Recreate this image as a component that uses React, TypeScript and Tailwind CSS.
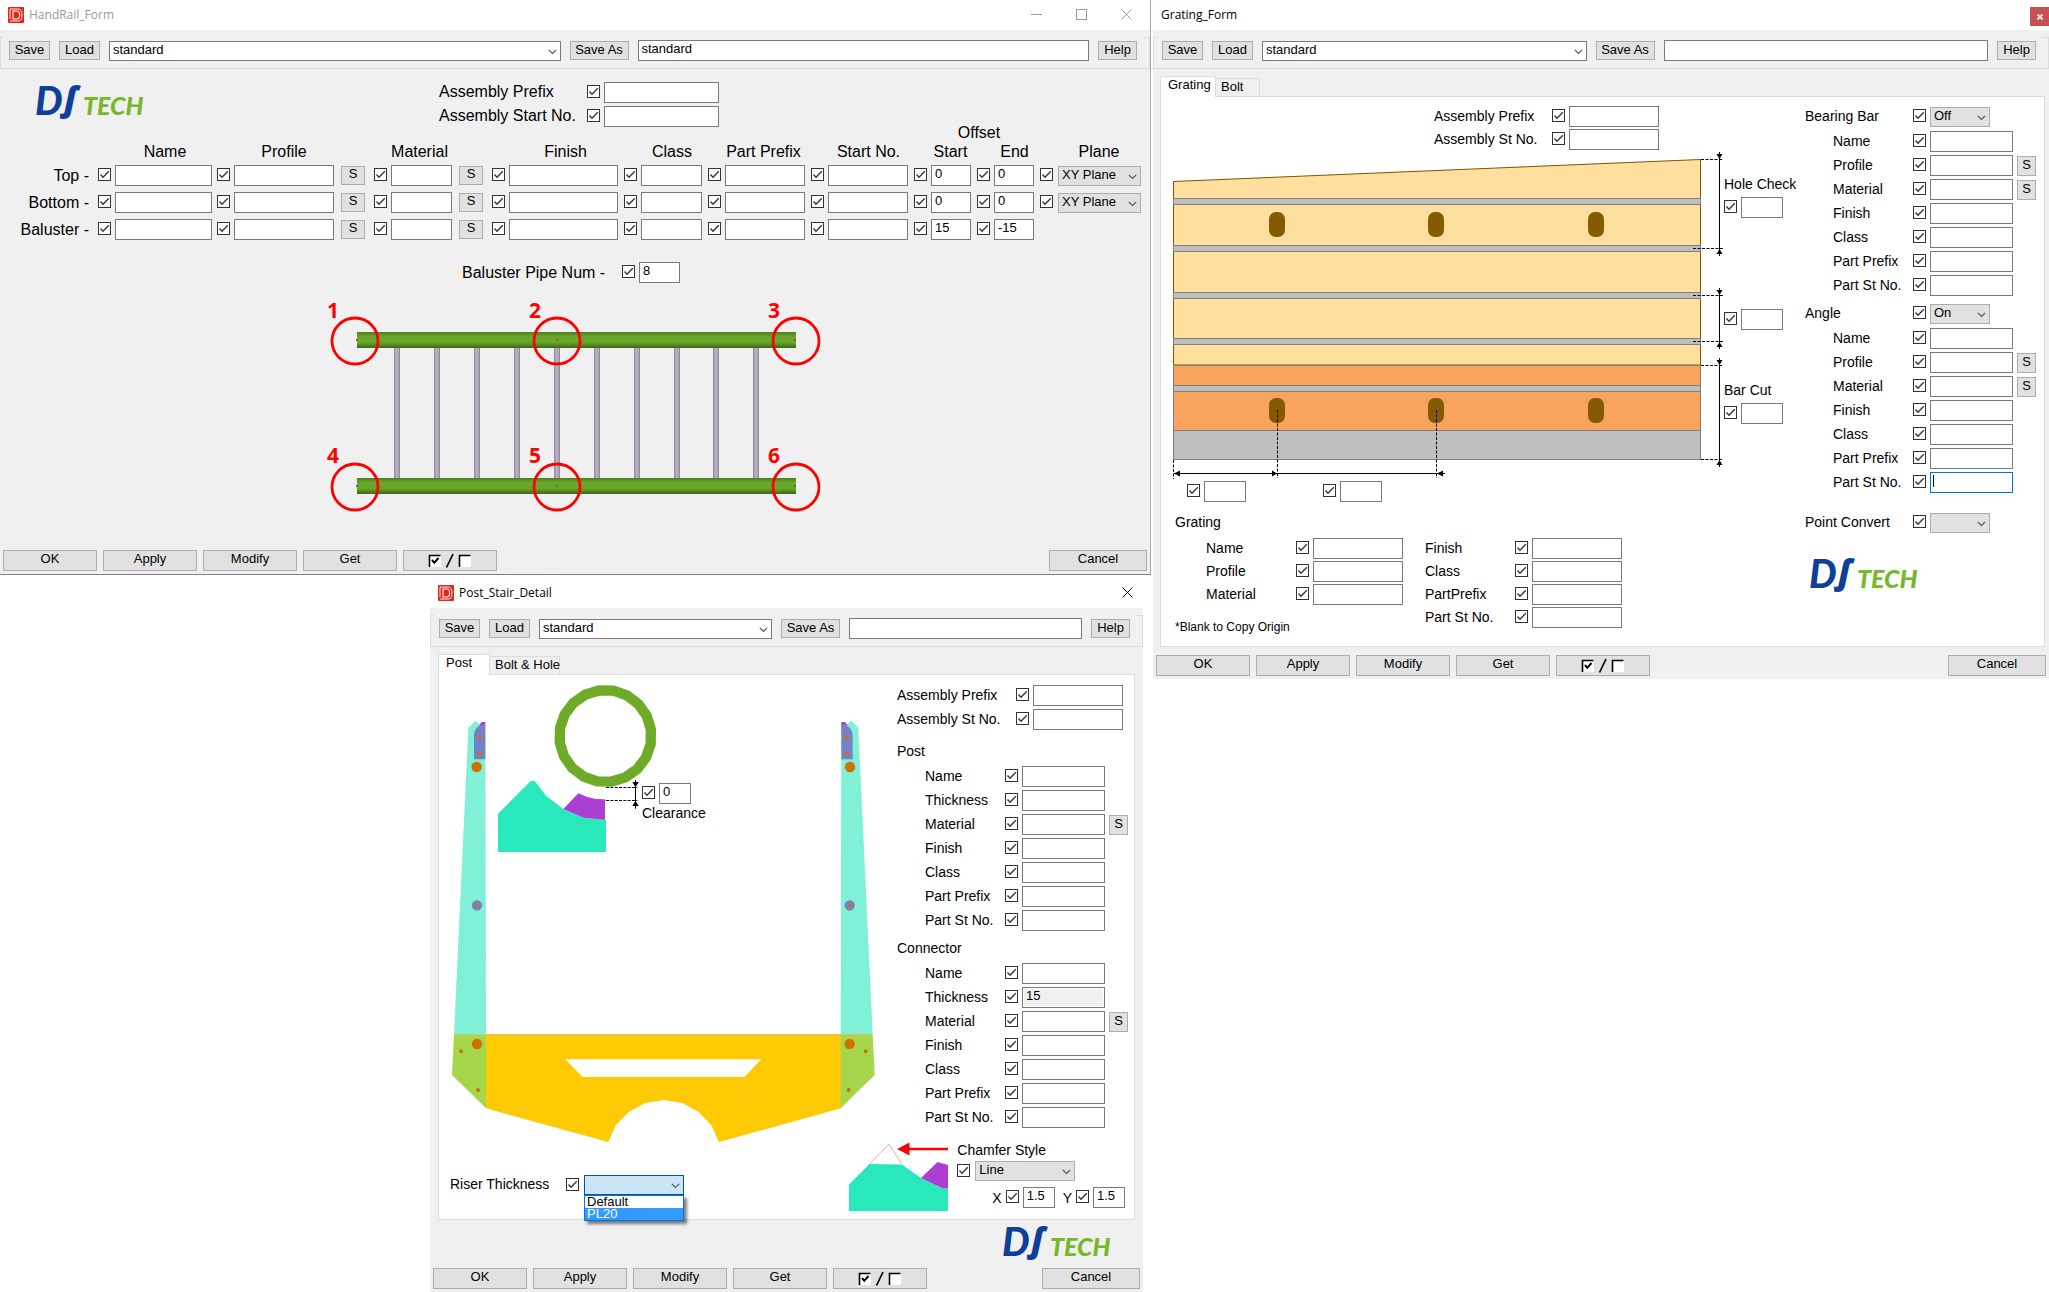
import { useId } from "react";
import type { ReactNode } from "react";

/* ---------- basic controls ---------- */

function Check({ label }: { label: string }) {
  return (
    <span className="mb-[2px] inline-grid size-[13px] shrink-0">
      <input
        type="checkbox"
        defaultChecked
        aria-label={label}
        className="peer col-start-1 row-start-1 size-[13px] appearance-none border border-[#333333] bg-white"
      />
      <svg
        viewBox="0 0 13 13"
        className="pointer-events-none col-start-1 row-start-1 size-[13px] opacity-0 peer-checked:opacity-100"
        fill="none"
        stroke="#333333"
        strokeWidth="1.3"
      >
        <path d="M2.5 6.5 L5 9.2 L10.8 3.2" />
      </svg>
    </span>
  );
}

function TextBox({
  id,
  label,
  value,
  width,
  focused,
  muted,
}: {
  id?: string;
  label?: string;
  value?: string;
  width: string;
  focused?: boolean;
  muted?: boolean;
}) {
  return (
    <span className={`relative flex h-[21px] min-w-0 ${width}`}>
      <input
        id={id}
        type="text"
        aria-label={label}
        defaultValue={value}
        className={`h-[21px] w-full min-w-0 border px-[3px] pb-1 text-[13px] leading-4 text-black outline-none ${
          focused ? "border-[#0078d7] caret-transparent" : "border-[#7a7a7a]"
        } ${muted ? "bg-[#f0f0f0] shadow-[inset_0_0_0_1px_#ffffff]" : "bg-white"}`}
      />
      {focused && <span className="pointer-events-none absolute top-[3px] left-[3px] h-[12px] w-px bg-black" />}
    </span>
  );
}

function Chevron() {
  return (
    <svg
      viewBox="0 0 9 6"
      className="pointer-events-none absolute top-[8px] right-[4px] h-[6px] w-[9px]"
      fill="none"
      stroke="#555555"
      strokeWidth="1.2"
    >
      <path d="M0.8 0.8 L4.5 4.5 L8.2 0.8" />
    </svg>
  );
}

function Select({
  id,
  label,
  value,
  width,
  tone = "grey",
}: {
  id?: string;
  label?: string;
  value: string;
  width: string;
  tone?: "grey" | "white" | "open";
}) {
  const tones = {
    grey: "bg-[#e1e1e1] border-[#adadad]",
    white: "bg-white border-[#7a7a7a]",
    open: "bg-[#cce4f7] border-[#005499]",
  };
  return (
    <span className={`relative flex h-[20px] min-w-0 ${width}`}>
      <select
        id={id}
        aria-label={label}
        defaultValue={value}
        className={`h-[20px] w-full appearance-none border pr-4 pb-[2px] pl-[3px] text-[13px] leading-4 text-black ${tones[tone]}`}
      >
        <option value={value}>{value}</option>
      </select>
      <Chevron />
    </span>
  );
}

function Button({ children, className }: { children: ReactNode; className: string }) {
  return (
    <button
      type="button"
      className={`flex shrink-0 items-center justify-center border border-[#adadad] bg-[#e1e1e1] text-[13px] leading-4 whitespace-nowrap text-black ${className}`}
    >
      {children}
    </button>
  );
}

/* ---------- brand marks ---------- */

function DsLogo() {
  return (
    <svg viewBox="0 0 107 28" className="h-[28px] w-[107px] shrink-0 overflow-visible" role="img" aria-label="DS TECH">
      <g fontStyle="italic" fontWeight="900" fontFamily="Lato, 'Open Sans', sans-serif">
        <text x="-1" y="28" fontSize="39" fill="#0f4099">
          D
        </text>
        <text x="28" y="24" fontSize="34" fill="#0f4099" fontFamily="'Open Sans', sans-serif" fontWeight="800">
          ſ
        </text>
        <text x="47" y="28" fontSize="25" fill="#76b82a">
          TECH
        </text>
      </g>
    </svg>
  );
}

function AppIcon() {
  return (
    <svg viewBox="0 0 16 16" className="size-4 shrink-0" aria-hidden="true">
      <rect width="16" height="16" rx="1" fill="#e0261d" />
      <path d="M2 2 H10 Q14 2 14 8 Q14 14 10 14 H2 M2 12 V2" fill="none" stroke="#ffffff" strokeWidth="0.9" />
      <path d="M5 4 H8.6 Q11.6 4 11.6 8 Q11.6 12 8.6 12 H5 Z" fill="none" stroke="#ffffff" strokeWidth="1.1" />
    </svg>
  );
}

/* ---------- window parts ---------- */

function Toolbar({ value }: { value: string }) {
  return (
    <div className="h-[39px] pt-[7px]">
      <div className="relative flex h-[32px] items-center gap-[9px] border-x border-b border-[#dcdcdc] pr-[12px] pb-[4px] pl-[8px] before:absolute before:top-0 before:left-0 before:h-px before:w-[3px] before:bg-[#dcdcdc] after:absolute after:top-0 after:right-0 after:h-px after:w-[6px] after:bg-[#dcdcdc]">
        <Button className="h-[19px] w-[41px] pb-px">Save</Button>
        <Button className="h-[19px] w-[41px] pb-px">Load</Button>
        <Select label="Saved settings" value="standard" width="flex-1" tone="white" />
        <Button className="h-[19px] w-[59px] pb-px">Save As</Button>
        <TextBox label="Save as name" value={value} width="flex-1" />
        <Button className="h-[19px] w-[39px] pb-px">Help</Button>
      </div>
    </div>
  );
}

function Footer() {
  return (
    <div className="flex gap-[6px] px-[3px] pb-[3px]">
      <Button className="h-[21px] w-[94px] pb-[3px]">OK</Button>
      <Button className="h-[21px] w-[94px] pb-[3px]">Apply</Button>
      <Button className="h-[21px] w-[94px] pb-[3px]">Modify</Button>
      <Button className="h-[21px] w-[94px] pb-[3px]">Get</Button>
      <Button className="h-[21px] w-[94px]">
        <svg viewBox="0 0 44 15" className="h-[15px] w-[44px]" aria-label="Toggle all" role="img">
          <g fill="#ffffff">
            <rect x="1" y="2" width="12" height="12" />
            <rect x="31" y="2" width="12" height="12" />
          </g>
          <path d="M1.5 14 V2.5 H12.5 M31.5 14 V2.5 H42.5" fill="none" stroke="#000000" strokeWidth="1.6" />
          <path d="M4 7 L6.3 9.8 L10.5 5" fill="none" stroke="#000000" strokeWidth="2" />
          <path d="M18.5 14.5 L25 1" stroke="#000000" strokeWidth="1.7" />
        </svg>
      </Button>
      <Button className="ml-auto h-[21px] w-[98px] pb-[3px]">Cancel</Button>
    </div>
  );
}

function Tabs({
  first,
  firstWidth,
  second,
  secondWidth,
}: {
  first: string;
  firstWidth: string;
  second: string;
  secondWidth: string;
}) {
  return (
    <div role="tablist" className="relative z-10 -mb-px flex items-end text-[13px] leading-4">
      <button
        role="tab"
        aria-selected="true"
        type="button"
        className={`flex h-[21px] items-center border border-b-0 border-[#dcdcdc] bg-white pb-1 pl-[7px] whitespace-nowrap ${firstWidth}`}
      >
        {first}
      </button>
      <button
        role="tab"
        aria-selected="false"
        type="button"
        className={`flex h-[19px] items-center border border-l-0 border-[#dcdcdc] bg-[#f0f0f0] pb-px pl-[5px] whitespace-nowrap ${secondWidth}`}
      >
        {second}
      </button>
    </div>
  );
}

function LabelledField({ label, labelWidth, width }: { label: string; labelWidth: string; width: string }) {
  const id = useId();
  return (
    <div className="flex items-center leading-4">
      <label htmlFor={id} className={`shrink-0 pb-[2px] whitespace-nowrap ${labelWidth}`}>
        {label}
      </label>
      <Check label={`Use ${label}`} />
      <span className="w-1 shrink-0" />
      <TextBox id={id} width={width} />
    </div>
  );
}

type Row = { label: string; s?: boolean; value?: string; muted?: boolean; focused?: boolean };

function FieldGroup({ title, select, rows }: { title: string; select?: string; rows: Row[] }) {
  const base = useId();
  return (
    <fieldset className="text-[14px] leading-4">
      <div className="mb-1 flex h-[21px] items-center">
        {select ? (
          <>
            <label htmlFor={`${base}-select`} className="w-[108px] pb-[2px]">
              {title}
            </label>
            <Check label={`Use ${title}`} />
            <span className="w-1" />
            <Select id={`${base}-select`} value={select} width="w-[60px]" />
          </>
        ) : (
          <span className="pb-[2px]">{title}</span>
        )}
      </div>
      <div className="flex flex-col gap-[3px]">
        {rows.map((row) => (
          <div key={row.label} className="flex h-[21px] items-center gap-1 pl-[28px]">
            <label htmlFor={`${base}-${row.label}`} className="w-[76px] pb-[2px] whitespace-nowrap">
              {row.label}
            </label>
            <Check label={`Use ${title} ${row.label}`} />
            <TextBox
              id={`${base}-${row.label}`}
              width="w-[83px]"
              value={row.value}
              muted={row.muted}
              focused={row.focused}
            />
            {row.s && <Button className="h-[20px] w-[19px] pb-px">S</Button>}
          </div>
        ))}
      </div>
    </fieldset>
  );
}

/* ---------- HandRail form ---------- */

const railColumns = [
  { title: "Name", width: "w-[119px]", pad: "pr-[5px]", head: "pl-[15px]" },
  { title: "Profile", width: "w-[157px]", pad: "pr-[9px]", head: "pr-[23px]", s: true },
  { title: "Material", width: "w-[118px]", pad: "pr-[9px]", head: "pr-[27px]", s: true },
  { title: "Finish", width: "w-[132px]", pad: "pr-[6px]", head: "pl-[15px]" },
  { title: "Class", width: "w-[84px]", pad: "pr-[6px]", head: "pl-[12px]" },
  { title: "Part Prefix", width: "w-[103px]", pad: "pr-[6px]", head: "pl-[8px]" },
  { title: "Start No.", width: "w-[103px]", pad: "pr-[6px]", head: "pl-[12px]" },
  { title: "Start", width: "w-[63px]", pad: "pr-[6px]", head: "pl-[10px]" },
  { title: "End", width: "w-[63px]", pad: "pr-[6px]", head: "pl-[12px]" },
];

const railRows = [
  { name: "Top", start: "0", end: "0", plane: true },
  { name: "Bottom", start: "0", end: "0", plane: true },
  { name: "Baluster", start: "15", end: "-15", plane: false },
];

function RailDiagram() {
  const bars = [397, 437, 477, 517, 557, 597, 637, 677, 716, 756];
  const marks = [
    { n: "1", x: 355, y: 341, tx: 327, ty: 318 },
    { n: "2", x: 557, y: 341, tx: 529, ty: 318 },
    { n: "3", x: 796, y: 341, tx: 768, ty: 318 },
    { n: "4", x: 355, y: 487, tx: 327, ty: 463 },
    { n: "5", x: 557, y: 487, tx: 529, ty: 463 },
    { n: "6", x: 796, y: 487, tx: 768, ty: 463 },
  ];
  return (
    <svg
      viewBox="320 296 510 224"
      className="h-[224px] w-[510px]"
      role="img"
      aria-label="Handrail with six reference points"
    >
      <defs>
        <linearGradient id="rail" x1="0" y1="0" x2="0" y2="1">
          <stop offset="0" stopColor="#4c7a20" />
          <stop offset="0.25" stopColor="#67a528" />
          <stop offset="0.65" stopColor="#67a828" />
          <stop offset="1" stopColor="#3f6418" />
        </linearGradient>
        <linearGradient id="bar" x1="0" y1="0" x2="1" y2="0">
          <stop offset="0" stopColor="#8d8896" />
          <stop offset="0.4" stopColor="#b6b0c4" />
          <stop offset="0.75" stopColor="#aea8bc" />
          <stop offset="1" stopColor="#7d7885" />
        </linearGradient>
      </defs>
      {bars.map((x) => (
        <rect key={x} x={x - 3} y="347" width="6" height="132" fill="url(#bar)" />
      ))}
      <rect x="357" y="332" width="439" height="16" fill="url(#rail)" />
      <rect x="357" y="478" width="439" height="16" fill="url(#rail)" />
      {[357, 557, 795].map((x) => (
        <g key={x}>
          <rect x={x - 1} y="339" width="2" height="2" fill="#b8501e" />
          <rect x={x - 1} y="485" width="2" height="2" fill="#3f7a5a" />
        </g>
      ))}
      {marks.map((m) => (
        <g key={m.n}>
          <circle cx={m.x} cy={m.y} r="23" fill="none" stroke="#ff0000" strokeWidth="2.8" />
          <text x={m.tx} y={m.ty} fontSize="21" fontWeight="700" fontFamily="'Open Sans', sans-serif" fill="#ff0000">
            {m.n}
          </text>
        </g>
      ))}
    </svg>
  );
}

function HandRailWindow() {
  return (
    <section className="border-r border-b border-r-[#a8a8a8] border-b-[#857a8c] bg-[#f0f0f0]">
      <header className="flex h-[30px] items-center gap-[5px] bg-white pb-px pl-[8px]">
        <AppIcon />
        <h1 className="font-['Open_Sans'] text-[12px] text-[#999999]">HandRail_Form</h1>
        <div className="ml-auto flex gap-[34px] pr-[18px]">
          <button type="button" aria-label="Minimize">
            <svg viewBox="0 0 11 11" className="size-[11px]" stroke="#999999" fill="none">
              <path d="M0 5.5 H11" />
            </svg>
          </button>
          <button type="button" aria-label="Maximize">
            <svg viewBox="0 0 11 11" className="size-[11px]" stroke="#999999" fill="none">
              <rect x="0.5" y="0.5" width="10" height="10" />
            </svg>
          </button>
          <button type="button" aria-label="Close">
            <svg viewBox="0 0 11 11" className="size-[11px]" stroke="#999999" fill="none">
              <path d="M0.5 0.5 L10.5 10.5 M10.5 0.5 L0.5 10.5" />
            </svg>
          </button>
        </div>
      </header>
      <Toolbar value="standard" />
      <div className="-mb-1 flex pt-[13px] pl-[36px] text-[16px] leading-5">
        <div className="w-[403px] pt-[5px]">
          <DsLogo />
        </div>
        <div className="flex flex-col gap-[3px]">
          <LabelledField label="Assembly Prefix" labelWidth="w-[148px]" width="w-[115px]" />
          <LabelledField label="Assembly Start No." labelWidth="w-[148px]" width="w-[115px]" />
        </div>
      </div>
      <table className="w-full table-fixed text-[16px] leading-5">
        <colgroup>
          <col className="w-[98px]" />
          {railColumns.map((c) => (
            <col key={c.title} className={c.width} />
          ))}
          <col />
        </colgroup>
        <thead>
          <tr className="h-[19px]">
            <td colSpan={8} />
            <th colSpan={2} scope="colgroup" className="p-0 pl-1 leading-4 font-normal">
              Offset
            </th>
            <td />
          </tr>
          <tr className="h-[20px]">
            <td />
            {railColumns.map((c) => (
              <th key={c.title} scope="col" className={`p-0 font-normal whitespace-nowrap ${c.head}`}>
                {c.title}
              </th>
            ))}
            <th scope="col" className="p-0 pl-[8px] font-normal">
              Plane
            </th>
          </tr>
        </thead>
        <tbody>
          {railRows.map((r) => (
            <tr key={r.name} className="h-[27px]">
              <th scope="row" className="p-0 pr-[9px] text-right font-normal whitespace-nowrap">
                {r.name} -
              </th>
              {railColumns.map((c) => (
                <td key={c.title} className="p-0">
                  <div className={`flex items-center gap-1 ${c.pad}`}>
                    <Check label={`Use ${r.name} ${c.title}`} />
                    <TextBox
                      label={`${r.name} ${c.title}`}
                      width="flex-1"
                      value={c.title === "Start" ? r.start : c.title === "End" ? r.end : ""}
                    />
                    {c.s && (
                      <span className="pl-[3px]">
                        <Button className="h-[19px] w-[24px] pb-1">S</Button>
                      </span>
                    )}
                  </div>
                </td>
              ))}
              <td className="p-0">
                {r.plane && (
                  <div className="flex items-center gap-[5px] pr-[9px]">
                    <Check label={`Use ${r.name} Plane`} />
                    <Select label={`${r.name} Plane`} value="XY Plane" width="flex-1" />
                  </div>
                )}
              </td>
            </tr>
          ))}
        </tbody>
      </table>
      <div className="flex items-center gap-1 pt-[19px] pl-[462px] text-[16px] leading-5">
        <label htmlFor="pipe-num" className="w-[156px]">
          Baluster Pipe Num -
        </label>
        <Check label="Use Baluster Pipe Num" />
        <TextBox id="pipe-num" value="8" width="w-[41px]" />
      </div>
      <div className="pt-[13px] pb-[30px] pl-[320px]">
        <RailDiagram />
      </div>
      <Footer />
    </section>
  );
}

/* ---------- Grating form ---------- */

function Dimension({ x, from, to }: { x: number; from: number; to: number }) {
  return (
    <g>
      <path d={`M${x} ${from - 7} V${to + 7}`} stroke="#000000" />
      <path d={`M${x - 3} ${from - 5} H${x + 3} L${x} ${from} Z`} />
      <path d={`M${x - 3} ${to + 5} H${x + 3} L${x} ${to} Z`} />
    </g>
  );
}

function GratingDiagram() {
  const slots = [1277, 1436, 1596];
  return (
    <svg
      viewBox="1161 150 562 330"
      className="h-[330px] w-[562px] shrink-0"
      role="img"
      aria-label="Grating section"
    >
      <path d="M1173.5 365 V181.5 L1700.5 159.5 V365 Z" fill="#ffdf9e" stroke="#805400" />
      <path d="M1173.5 365.5 H1700.5 V430.5 H1173.5 Z" fill="#f9a45e" stroke="#808080" />
      <path d="M1173.5 430.5 H1700.5 V459.5 H1173.5 Z" fill="#bfbfbf" stroke="#808080" />
      {[198, 245, 292, 338, 385].map((y) => (
        <rect key={y} x="1173.5" y={y + 0.5} width="527" height="6" fill="#bfbfbf" stroke="#808080" />
      ))}
      {slots.map((x) => (
        <g key={x} fill="#855a00">
          <rect x={x - 8} y="212" width="16" height="25" rx="7" />
          <rect x={x - 8} y="398" width="16" height="25" rx="7" />
        </g>
      ))}
      <g stroke="#000000" strokeDasharray="3 1.5" fill="none">
        <path d="M1173.5 460 V479 M1277.5 410 V478 M1436.5 410 V478" />
        <path d="M1701 159.5 H1725 M1693 248.5 H1725 M1693 295.5 H1725 M1693 341.5 H1725 M1701 365.5 H1725 M1701 459.5 H1725" />
      </g>
      <path d="M1174 473.5 H1445" stroke="#000000" />
      <path d="M1174 473.5 l6 -3 v6 Z M1277 473.5 l-5 -3 v6 Z M1437 473.5 l6 -3 v6 Z" />
      <Dimension x={1719.5} from={159} to={249} />
      <Dimension x={1719.5} from={295} to={342} />
      <Dimension x={1719.5} from={365} to={460} />
    </svg>
  );
}

function SmallField({ label }: { label: string }) {
  return (
    <div className="flex items-center gap-1">
      <Check label={`Use ${label}`} />
      <TextBox label={label} width="w-[42px]" />
    </div>
  );
}

const gratingRows: Row[] = [
  { label: "Name" },
  { label: "Profile", s: true },
  { label: "Material", s: true },
  { label: "Finish" },
  { label: "Class" },
  { label: "Part Prefix" },
  { label: "Part St No." },
];

function GratingWindow() {
  return (
    <section className="bg-[#f0f0f0]">
      <header className="flex h-[30px] items-center bg-white pl-[8px]">
        <h1 className="pb-px font-['Open_Sans'] text-[12px] text-black">Grating_Form</h1>
        <button
          type="button"
          aria-label="Close"
          className="mt-[3px] ml-auto flex size-[19px] items-center justify-center bg-[#c75050]"
        >
          <svg viewBox="0 0 6 6" className="size-[6px]" stroke="#ffffff" strokeWidth="1.6">
            <path d="M0.5 0.5 L5.5 5.5 M5.5 0.5 L0.5 5.5" />
          </svg>
        </button>
      </header>
      <Toolbar value="" />
      <div className="pt-[7px] pr-[4px] pb-[8px] pl-[7px]">
        <Tabs first="Grating" firstWidth="w-[56px]" second="Bolt" secondWidth="w-[44px]" />
        <div className="flex justify-between border border-[#dcdcdc] bg-white pt-[9px] pr-[8px] pb-[11px] text-[14px] leading-4">
          <div>
            <div className="flex flex-col gap-[2px] pl-[273px]">
              <LabelledField label="Assembly Prefix" labelWidth="w-[118px]" width="w-[90px]" />
              <LabelledField label="Assembly St No." labelWidth="w-[118px]" width="w-[90px]" />
            </div>
            <div className="flex">
              <GratingDiagram />
              <div className="flex flex-col pt-[26px] pl-px">
                <span className="mb-[5px]">Hole Check</span>
                <SmallField label="Hole Check" />
                <div className="mt-[91px] mb-[52px]">
                  <SmallField label="Bar pitch" />
                </div>
                <span className="mb-[5px]">Bar Cut</span>
                <SmallField label="Bar Cut" />
              </div>
            </div>
            <div className="flex gap-[77px] pt-px pl-[26px]">
              <SmallField label="First hole offset" />
              <SmallField label="Hole spacing" />
            </div>
            <h2 className="pt-[12px] pl-[14px]">Grating</h2>
            <div className="flex gap-[22px] pt-[8px] pl-[14px]">
              <div>
                <div className="flex flex-col gap-[2px] pl-[31px]">
                  <LabelledField label="Name" labelWidth="w-[90px]" width="w-[90px]" />
                  <LabelledField label="Profile" labelWidth="w-[90px]" width="w-[90px]" />
                  <LabelledField label="Material" labelWidth="w-[90px]" width="w-[90px]" />
                </div>
                <p className="pt-[14px] text-[12px]">*Blank to Copy Origin</p>
              </div>
              <div className="flex flex-col gap-[2px]">
                <LabelledField label="Finish" labelWidth="w-[90px]" width="w-[90px]" />
                <LabelledField label="Class" labelWidth="w-[90px]" width="w-[90px]" />
                <LabelledField label="PartPrefix" labelWidth="w-[90px]" width="w-[90px]" />
                <LabelledField label="Part St No." labelWidth="w-[90px]" width="w-[90px]" />
              </div>
            </div>
          </div>
          <div className="w-[231px] shrink-0">
            <FieldGroup title="Bearing Bar" select="Off" rows={gratingRows} />
            <div className="pt-[7px]">
              <FieldGroup
                title="Angle"
                select="On"
                rows={gratingRows.map((r) => (r.label === "Part St No." ? { ...r, focused: true } : r))}
              />
            </div>
            <div className="pt-[19px]">
              <FieldGroup title="Point Convert" select=" " rows={[]} />
            </div>
            <div className="pt-[23px] pl-[5px]">
              <DsLogo />
            </div>
          </div>
        </div>
      </div>
      <Footer />
    </section>
  );
}

/* ---------- Post stair form ---------- */

function ringPoints(cx: number, cy: number, r: number) {
  return Array.from({ length: 20 }, (_, i) => {
    const a = ((-98 + i * 18) * Math.PI) / 180;
    return `${cx + r * Math.cos(a)},${cy + r * Math.sin(a)}`;
  }).join(" ");
}

function PostShape() {
  return (
    <g>
      <path d="M115 474 L136 452 L148 462 L166 470 L168 1393 L72 1393 Z" fill="#80f0d6" />
      <path d="M148 464 L155 456 H166 V470 Z" fill="#ab3fd1" />
      <path d="M166 465 H150 Q134 476 132 492 V568 H166 Z" fill="#7682c8" />
      <path d="M72 1393 H168 V1615 L66 1515 Z" fill="#a6d64c" />
      <g fill="#d07000">
        <circle cx="149" cy="501" r="6" />
        <circle cx="149" cy="551" r="6" />
        <circle cx="140" cy="591" r="15.5" />
        <circle cx="141" cy="1422" r="15.5" />
        <circle cx="93" cy="1444" r="6" />
        <circle cx="144" cy="1560" r="6" />
      </g>
      <circle cx="141" cy="1006" r="15.5" fill="#7682c8" />
      <circle cx="141" cy="1006" r="6" fill="#c77026" />
    </g>
  );
}

function PostDiagram() {
  return (
    <svg viewBox="60 339 1281 1377" className="h-[459px] w-[427px]" role="img" aria-label="Stair post and riser">
      <path
        fillRule="evenodd"
        fill="#ffc903"
        d="M168 1393 H1233 V1615 L867 1716 L844 1666 L806 1626 L757 1599 L700 1590 L645 1599 L596 1626 L557 1666 L535 1716 L168 1615 Z M406 1468 L458 1521 H943 L994 1468 Z"
      />
      <PostShape />
      <g transform="translate(1400 0) scale(-1 1)">
        <PostShape />
      </g>
      <path d="M72 1393.5 H1329" stroke="#d8c078" strokeWidth="3" />
      <polygon points={ringPoints(526, 498, 138)} fill="none" stroke="#6dab28" strokeWidth="31" />
      <path
        d="M204 731 L302 633 H314 L349 678 L400 717 L461 743 L525 750 H528 V846 H204 Z"
        fill="#28e8bc"
      />
      <path d="M445 670 L470 680 L497 687 L525 688 V750 L461 743 L400 717 Z" fill="#ab3fd1" />
      <g stroke="#000000" strokeWidth="3" fill="none">
        <path strokeDasharray="9 4" d="M528 652.5 H622 M528 691.5 H622" />
        <path d="M616.5 630 V716" />
      </g>
      <path d="M607 636 H626 L616.5 652 Z M607 708 H626 L616.5 692 Z" />
    </svg>
  );
}

function ChamferDiagram() {
  return (
    <svg viewBox="849 1142 99 69" className="h-[69px] w-[99px] shrink-0" role="img" aria-label="Chamfer">
      <path d="M849 1184.5 L869.5 1164 L902 1164.5 L921 1178 L942 1188 L948 1188.5 V1211 H849 Z" fill="#28e8bc" />
      <path d="M921 1178 L937.5 1162 L948 1165 V1188.5 L942 1188 Z" fill="#ab3fd1" />
      <path d="M869.5 1164 L889 1144 L902 1164.5" fill="none" stroke="#f7a8a8" />
      <path d="M908 1149 H948" stroke="#ff0000" strokeWidth="2.4" />
      <path d="M897 1149 L909.5 1142.5 V1155.5 Z" fill="#ff0000" />
    </svg>
  );
}

const postRows: Row[] = [
  { label: "Name" },
  { label: "Thickness" },
  { label: "Material", s: true },
  { label: "Finish" },
  { label: "Class" },
  { label: "Part Prefix" },
  { label: "Part St No." },
];

function PostWindow() {
  return (
    <section className="bg-[#f0f0f0]">
      <header className="flex h-[33px] items-center gap-[5px] bg-white pt-[2px] pl-[8px]">
        <AppIcon />
        <h1 className="font-['Open_Sans'] text-[12px] text-black">Post_Stair_Detail</h1>
        <button type="button" aria-label="Close" className="mr-[10px] ml-auto">
          <svg viewBox="0 0 11 11" className="size-[11px]" stroke="#000000" fill="none">
            <path d="M0.5 0.5 L10.5 10.5 M10.5 0.5 L0.5 10.5" />
          </svg>
        </button>
      </header>
      <Toolbar value="" />
      <div className="px-[8px] pt-[7px]">
        <Tabs first="Post" firstWidth="w-[52px]" second="Bolt & Hole" secondWidth="w-[70px]" />
        <div className="border border-[#dcdcdc] bg-white text-[14px] leading-4">
          <div className="flex justify-between pr-[6px] pl-[11px]">
            <div className="relative pt-[8px]">
              <PostDiagram />
              <div className="absolute top-[108px] left-[192px]">
                <div className="flex items-center gap-1 pb-px">
                  <Check label="Use Clearance" />
                  <TextBox id="clearance" value="0" width="w-[32px]" />
                </div>
                <label htmlFor="clearance">Clearance</label>
              </div>
            </div>
            <div className="w-[231px] shrink-0 pt-[10px]">
              <div className="flex flex-col gap-[3px]">
                <LabelledField label="Assembly Prefix" labelWidth="w-[119px]" width="w-[90px]" />
                <LabelledField label="Assembly St No." labelWidth="w-[119px]" width="w-[90px]" />
              </div>
              <div className="flex flex-col gap-[7px] pt-[11px]">
                <FieldGroup title="Post" rows={postRows} />
                <FieldGroup
                  title="Connector"
                  rows={postRows.map((r) => (r.label === "Thickness" ? { ...r, value: "15", muted: true } : r))}
                />
              </div>
            </div>
          </div>
          <div className="flex justify-between pr-[9px] pb-[8px] pl-[11px]">
            <div className="flex items-center gap-[4px] pt-[17px]">
              <label htmlFor="riser" className="w-[112px] pb-[2px]">
                Riser Thickness
              </label>
              <Check label="Use Riser Thickness" />
              <div className="relative pl-px">
                <Select id="riser" value=" " width="w-[100px]" tone="open" />
                <ul
                  role="listbox"
                  aria-label="Riser Thickness options"
                  className="absolute top-[20px] right-0 z-10 w-[100px] border border-[#0078d7] bg-white text-[13px] leading-3 shadow-[3px_3px_3px_rgba(0,0,0,0.5)]"
                >
                  <li role="option" aria-selected="false" className="h-[12px] pl-[2px]">
                    Default
                  </li>
                  <li role="option" aria-selected="true" className="h-[12px] bg-[#3399ff] pl-[2px] text-white">
                    PL20
                  </li>
                </ul>
              </div>
            </div>
            <div className="flex gap-[9px]">
              <ChamferDiagram />
              <div>
                <label htmlFor="chamfer" className="block pb-[3px]">
                  Chamfer Style
                </label>
                <div className="flex items-center gap-[5px]">
                  <Check label="Use Chamfer Style" />
                  <Select id="chamfer" value="Line" width="w-[100px]" />
                </div>
                <div className="flex items-center gap-[4px] pt-[6px] pl-[35px]">
                  <label htmlFor="chamfer-x">X</label>
                  <Check label="Use X" />
                  <TextBox id="chamfer-x" value="1.5" width="w-[32px]" />
                  <label htmlFor="chamfer-y" className="pl-[4px]">
                    Y
                  </label>
                  <Check label="Use Y" />
                  <TextBox id="chamfer-y" value="1.5" width="w-[32px]" />
                </div>
              </div>
            </div>
          </div>
        </div>
      </div>
      <div className="flex justify-end pt-[8px] pr-[33px] pb-[12px]">
        <DsLogo />
      </div>
      <Footer />
    </section>
  );
}

export default function App() {
  return (
    <main className="grid min-h-screen grid-cols-[1153fr_896fr] items-start bg-white font-['Liberation_Sans',Arial,sans-serif] text-black">
      <div>
        <div className="pr-[2px]">
          <HandRailWindow />
        </div>
        <div className="pr-[10px] pl-[430px]">
          <PostWindow />
        </div>
      </div>
      <GratingWindow />
    </main>
  );
}
